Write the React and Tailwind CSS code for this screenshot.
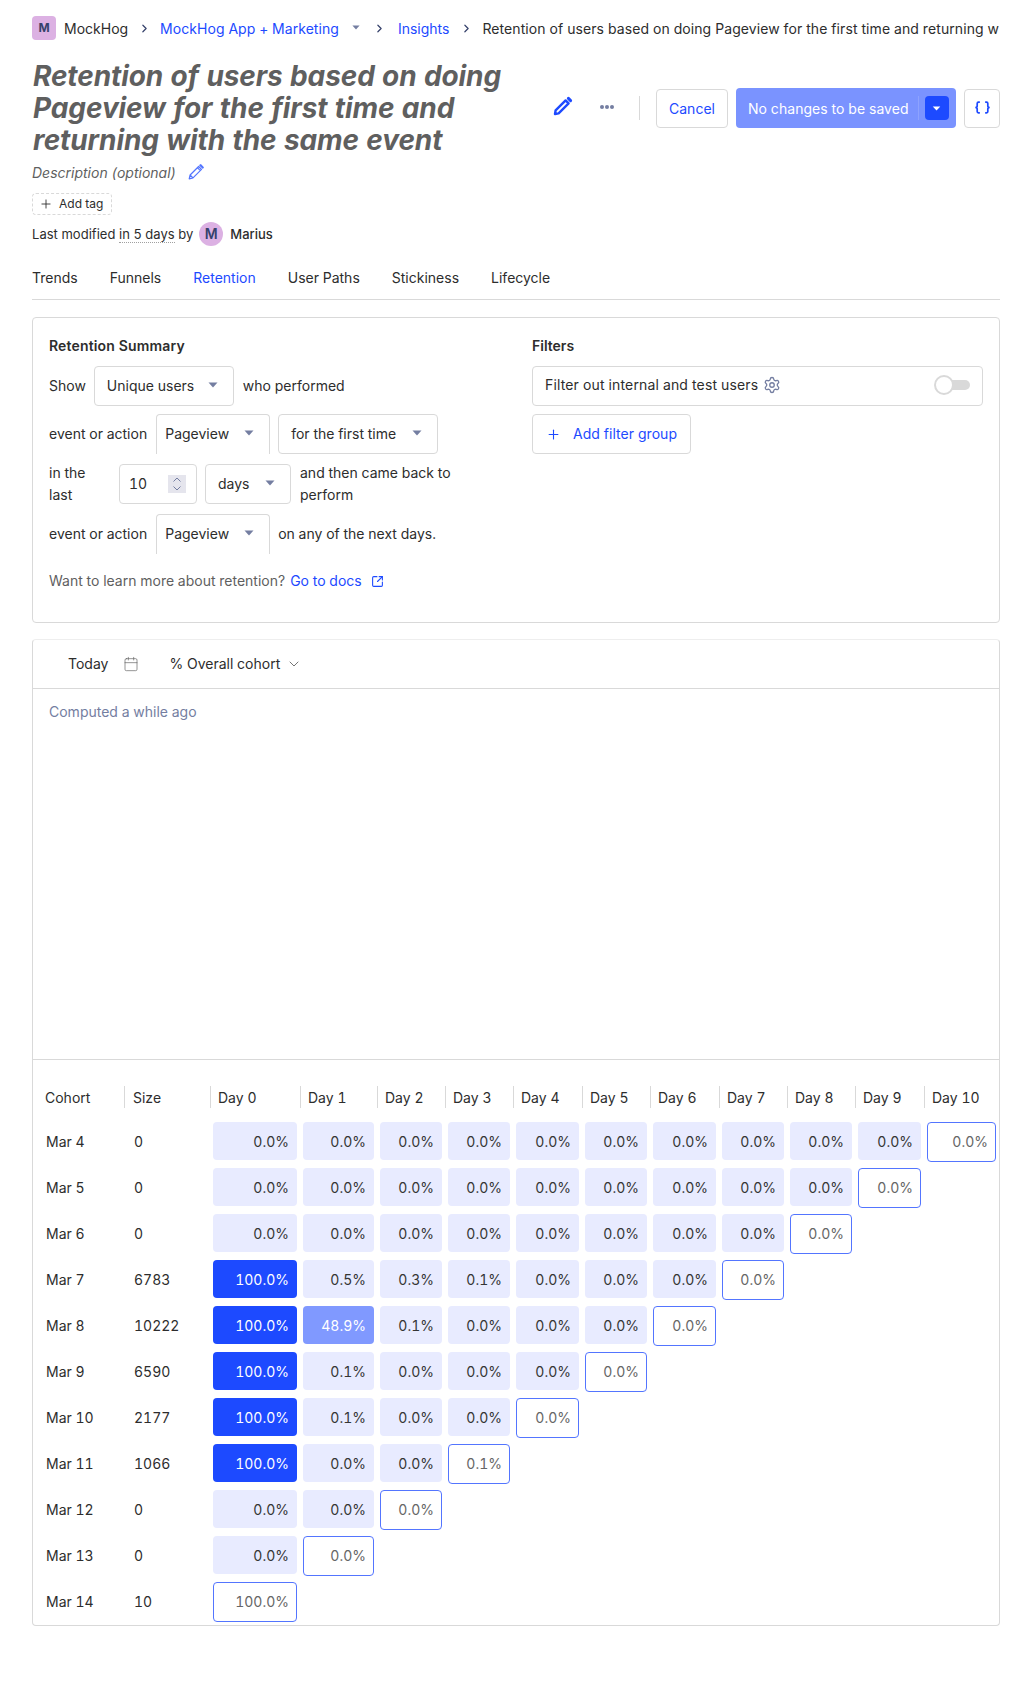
import React from 'react';
import { Calendar, ChevronDown, ChevronRight, Plus, Settings, SquareArrowOutUpRight } from 'lucide-react';

const cohorts = [
    { label: 'Mar 4', size: '0', values: ['0.0', '0.0', '0.0', '0.0', '0.0', '0.0', '0.0', '0.0', '0.0', '0.0', '0.0'] },
    { label: 'Mar 5', size: '0', values: ['0.0', '0.0', '0.0', '0.0', '0.0', '0.0', '0.0', '0.0', '0.0', '0.0'] },
    { label: 'Mar 6', size: '0', values: ['0.0', '0.0', '0.0', '0.0', '0.0', '0.0', '0.0', '0.0', '0.0'] },
    { label: 'Mar 7', size: '6783', values: ['100.0', '0.5', '0.3', '0.1', '0.0', '0.0', '0.0', '0.0'] },
    { label: 'Mar 8', size: '10222', values: ['100.0', '48.9', '0.1', '0.0', '0.0', '0.0', '0.0'] },
    { label: 'Mar 9', size: '6590', values: ['100.0', '0.1', '0.0', '0.0', '0.0', '0.0'] },
    { label: 'Mar 10', size: '2177', values: ['100.0', '0.1', '0.0', '0.0', '0.0'] },
    { label: 'Mar 11', size: '1066', values: ['100.0', '0.0', '0.0', '0.1'] },
    { label: 'Mar 12', size: '0', values: ['0.0', '0.0', '0.0'] },
    { label: 'Mar 13', size: '0', values: ['0.0', '0.0'] },
    { label: 'Mar 14', size: '10', values: ['100.0'] },
];

const columns = [
    { label: 'Size', width: 'w-[86px]', pad: 'pl-2' },
    { label: 'Day 0', width: 'w-[90px]', pad: 'pl-[7px]' },
    { label: 'Day 1', width: 'w-[77px]', pad: 'pl-[7px]' },
    { label: 'Day 2', width: 'w-[68px]', pad: 'pl-[7px]' },
    { label: 'Day 3', width: 'w-[68px]', pad: 'pl-[7px]' },
    { label: 'Day 4', width: 'w-[69px]', pad: 'pl-[7px]' },
    { label: 'Day 5', width: 'w-[68px]', pad: 'pl-[7px]' },
    { label: 'Day 6', width: 'w-[69px]', pad: 'pl-[7px]' },
    { label: 'Day 7', width: 'w-[68px]', pad: 'pl-[7px]' },
    { label: 'Day 8', width: 'w-[68px]', pad: 'pl-[7px]' },
    { label: 'Day 9', width: 'w-[69px]', pad: 'pl-[7px]' },
    { label: 'Day 10', width: 'w-[75px]', pad: 'pl-[7px]' },
];

const Caret = ({ className }) => (
    <svg viewBox="0 0 10 6" className={className} fill="currentColor">
        <path d="M0.5 0.5h9L5 5.5z" />
    </svg>
);

const PencilBold = ({ className }) => (
    <svg viewBox="0 0 20 20" className={className} fill="none" stroke="currentColor" strokeWidth="2.4" strokeLinejoin="round">
        <path d="M2 18l.6-3.6L12.6 4.4l3 3L5.6 17.4z" />
        <path d="M15.4 2.4l2.2 2.2" strokeWidth="3" strokeLinecap="round" />
    </svg>
);

const PencilOutline = ({ className }) => (
    <svg viewBox="0 0 16 16" className={className} fill="none" stroke="currentColor" strokeWidth="1.2" strokeLinejoin="round">
        <path d="M1.2 14.8l.9-3.8L10.6 2.5l2.9 2.9-8.5 8.5zM2.1 11l2.9 2.9M9.4 3.7l2.9 2.9M11.8 1.3l.9-.6 2.6 2.6-.6.9z" />
    </svg>
);

const CurlyBraces = ({ className }) => (
    <svg viewBox="0 0 16 12" className={className} fill="none" stroke="currentColor" strokeWidth="1.6">
        <path d="M5.5 1H4.2C3.4 1 3 1.4 3 2.2v2.4C3 5.4 2.4 6 1.2 6 2.4 6 3 6.6 3 7.4v2.4c0 .8.4 1.2 1.2 1.2h1.3" />
        <path d="M10.5 1h1.3c.8 0 1.2.4 1.2 1.2v2.4c0 .8.6 1.4 1.8 1.4-1.2 0-1.8.6-1.8 1.4v2.4c0 .8-.4 1.2-1.2 1.2h-1.3" />
    </svg>
);

const StepperArrows = () => (
    <svg viewBox="0 0 18 18" className="w-[18px] h-[18px] bg-[#e5e5ed]" fill="none" stroke="#747ea1" strokeWidth="1">
        <path d="M5.5 6.5L9 3l3.5 3.5M5.5 11.5L9 15l3.5-3.5" />
    </svg>
);

const Select = ({ label, width, clipped, pad = 'pl-3' }) => (
    <div className={`flex items-center justify-between h-10 shrink-0 ${pad} pr-[15px] border border-[#d9d9d9] ${clipped ? 'pb-0.5 rounded-t-[4px] border-b-0' : 'rounded-[4px]'} ${width}`}>
        <span>{label}</span>
        <Caret className="w-[10px] h-[6px] text-[#747ea1] mb-0.5" />
    </div>
);

const Cell = ({ value, latest }) => {
    if (latest) {
        return (
            <div className="h-10 border border-[#5375ff] rounded-[4px] bg-white text-right pr-[7px] leading-[38px] text-[#666666]">
                {value}%
            </div>
        );
    }
    const isFull = value === '100.0';
    const isMid = value === '48.9';
    return (
        <div className={`h-[38px] rounded-[4px] text-right pr-[8px] leading-[40px] ${isFull ? 'bg-[#1d4aff] text-white' : isMid ? 'bg-[#8099ff] text-white' : 'bg-[#e8ebff] text-[#353535]'}`}>
            {value}%
        </div>
    );
};

const App = () => {
    return (
        <div className="min-h-[1705px] bg-white px-8 pt-4 font-[Inter,sans-serif] text-sm text-[#2d2d2d] tabular-nums overflow-hidden">
            {/* breadcrumbs */}
            <div className="flex items-center h-6 whitespace-nowrap">
                <div className="flex items-center justify-center w-6 h-6 shrink-0 rounded-[4px] bg-[#dcb1e3] text-[#35416b] text-xs font-bold">M</div>
                <span className="ml-2 pt-px">MockHog</span>
                <ChevronRight size={13} strokeWidth={2.25} className="ml-[10px] shrink-0 text-[#35416b]" />
                <span className="ml-[9px] pt-px tracking-[0.05px] text-[#1d4aff]">MockHog App + Marketing</span>
                <Caret className="ml-[13px] w-2 h-[5px] shrink-0 text-[#747ea1] mb-0.5" />
                <ChevronRight size={13} strokeWidth={2.25} className="ml-[13px] shrink-0 text-[#35416b]" />
                <span className="ml-[12px] pt-px text-[#1d4aff]">Insights</span>
                <ChevronRight size={13} strokeWidth={2.25} className="ml-[11px] shrink-0 text-[#35416b]" />
                <span className="ml-[9px] pt-px tracking-[0.09px]">Retention of users based on doing Pageview for the first time and returning w</span>
            </div>

            {/* title + actions */}
            <div className="flex items-center justify-between mt-5">
                <h1 className="w-[500px] pl-px text-[28px] leading-8 font-bold italic tracking-[-0.1px] text-[#5f5f5f] [font-optical-sizing:none]">
                    Retention of users based on doing Pageview for the first time and returning with the same event
                </h1>
                <div className="flex items-center">
                    <PencilBold className="w-5 h-5 mb-1 text-[#1d4aff]" />
                    <div className="flex items-center gap-px ml-[27px] mb-[3px]">
                        <span className="w-1 h-1 rounded-full bg-[#747ea1]" />
                        <span className="w-1 h-1 rounded-full bg-[#747ea1]" />
                        <span className="w-1 h-1 rounded-full bg-[#747ea1]" />
                    </div>
                    <div className="w-px h-6 bg-[#d9d9d9] ml-[25px]" />
                    <button className="w-[72px] h-[39px] self-end ml-4 rounded-[4px] border border-[#d9d9d9] text-[#1d4aff]">Cancel</button>
                    <div className="flex items-center w-[220px] h-10 ml-2 pl-3 rounded-[4px] bg-[#7a93ff] text-white">
                        <span className="pt-[2px] tracking-[0.05px]">No changes to be saved</span>
                        <div className="w-px h-6 bg-[#8da2ff] ml-[9px]" />
                        <div className="flex items-center justify-center w-6 h-6 ml-[6px] rounded-[4px] bg-[#1d4aff]">
                            <Caret className="w-[9px] h-[5px] text-white" />
                        </div>
                    </div>
                    <button className="flex items-center justify-center w-9 h-[39px] self-end ml-2 rounded-[4px] border border-[#d9d9d9] text-[#1d4aff]">
                        <CurlyBraces className="w-[17px] h-[13px] mb-[3px]" />
                    </button>
                </div>
            </div>

            {/* meta */}
            <div className="flex items-center h-[22px] mt-[6px] italic text-[#5f5f5f]">
                <span>Description (optional)</span>
                <PencilOutline className="w-4 h-4 ml-[12px] mb-[3px] text-[#5375ff]" />
            </div>
            <div className="flex items-center w-[80px] h-[22px] mt-[9px] pl-[6px] rounded-[4px] border border-dashed border-[#d9d9d9] text-xs">
                <Plus size={14} strokeWidth={1.5} />
                <span className="ml-[6px]">Add tag</span>
            </div>
            <div className="flex items-center h-6 mt-[7px] text-[13px]">
                <span className="tracking-[0.03px]">Last modified <span className="border-b border-dotted border-[#a0a0a0]">in 5 days</span> by</span>
                <div className="flex items-center justify-center w-6 h-6 ml-[6px] rounded-full bg-[#dcb1e3] text-[#35416b] text-sm font-semibold">M</div>
                <span className="ml-[7px] font-medium">Marius</span>
            </div>

            {/* tabs */}
            <div className="flex gap-8 h-[34px] mt-5 border-b border-[#d9d9d9] leading-6">
                <span>Trends</span>
                <span>Funnels</span>
                <span className="text-[#1d4aff]">Retention</span>
                <span>User Paths</span>
                <span>Stickiness</span>
                <span>Lifecycle</span>
            </div>

            {/* summary */}
            <div className="grid grid-cols-[483px_1fr] mt-[17px] px-4 pt-[17px] pb-[30px] rounded-[4px] border border-[#d9d9d9] leading-[22px]">
                <div>
                    <div className="font-semibold tracking-[0.15px]">Retention Summary</div>
                    <div className="flex items-center gap-2 mt-[9px]">
                        <span>Show</span>
                        <Select label="Unique users" width="w-[140px]" />
                        <span className="ml-px">who performed</span>
                    </div>
                    <div className="flex items-center gap-2 mt-2">
                        <span className="mr-px">event or action</span>
                        <Select label="Pageview" width="w-[114px]" clipped pad="pl-[8px]" />
                        <Select label="for the first time" width="w-[160px]" />
                    </div>
                    <div className="flex items-center gap-2 h-10 mt-[10px]">
                        <span className="w-[62px]">in the last</span>
                        <div className="flex items-center justify-between w-[78px] h-10 pl-[9px] pr-[10px] rounded-[4px] border border-[#d9d9d9]">
                            <span>10</span>
                            <StepperArrows />
                        </div>
                        <Select label="days" width="w-[86px]" />
                        <span className="w-[160px] ml-px">and then came back to perform</span>
                    </div>
                    <div className="flex items-center gap-2 mt-[10px]">
                        <span className="mr-px">event or action</span>
                        <Select label="Pageview" width="w-[114px]" clipped pad="pl-[8px]" />
                        <span>on any of the next days.</span>
                    </div>
                    <div className="flex items-center mt-4 text-[#5f5f5f]">
                        <span>Want to learn more about retention?</span>
                        <span className="ml-[5px] text-[#1d4aff]">Go to docs</span>
                        <SquareArrowOutUpRight size={13} className="ml-[9px] text-[#1d4aff]" />
                    </div>
                </div>
                <div>
                    <div className="font-semibold">Filters</div>
                    <div className="flex items-center justify-between h-10 mt-[9px] pl-3 pr-3 pb-0.5 rounded-[4px] border border-[#d9d9d9]">
                        <div className="flex items-center gap-[5px]">
                            <span className="tracking-[0.15px]">Filter out internal and test users</span>
                            <Settings size={18} strokeWidth={1.75} className="text-[#747ea1]" />
                        </div>
                        <div className="relative w-9 h-5 flex items-center">
                            <div className="ml-2 w-[28px] h-[10px] rounded-full bg-[#d9d9d9]" />
                            <div className="absolute left-0 w-5 h-5 rounded-full bg-white border-2 border-[#d9d9d9]" />
                        </div>
                    </div>
                    <div className="flex items-center w-[159px] h-10 mt-2 pl-[13px] rounded-[4px] border border-[#d9d9d9] text-[#1d4aff]">
                        <Plus size={15} strokeWidth={1.75} />
                        <span className="ml-[12px] tracking-[0.05px]">Add filter group</span>
                    </div>
                </div>
            </div>

            {/* results */}
            <div className="mt-4 rounded-[4px] border border-[#d9d9d9] border-t-[#eeeeee]">
                <div className="flex items-center h-[49px] pl-[35px] border-b border-[#d9d9d9]">
                    <span>Today</span>
                    <Calendar size={16} strokeWidth={1} className="ml-[15px] text-[#5f5f5f]" />
                    <span className="ml-[30px]">% Overall cohort</span>
                    <ChevronDown size={16} strokeWidth={1} className="ml-[6px] text-[#2d2d2d]" />
                </div>
                <div className="h-[371px] pl-4 pt-3 border-b border-[#d9d9d9] leading-[22px] text-[#747ea1]">Computed a while ago</div>
                <table className="table-fixed border-collapse w-[966px] mb-px">
                    <thead>
                        <tr className="h-[58px]">
                            <th className="w-[91px] pt-[26px] align-top text-left font-normal">
                                <div className="h-[22px] pl-3 leading-[24px]">Cohort</div>
                            </th>
                            {columns.map((col) => (
                                <th key={col.label} className={`${col.width} pt-[26px] align-top text-left font-normal`}>
                                    <div className={`h-[22px] ${col.pad} leading-[24px] border-l border-[#d9d9d9]`}>{col.label}</div>
                                </th>
                            ))}
                        </tr>
                    </thead>
                    <tbody>
                        {cohorts.map((row) => (
                            <tr key={row.label} className="h-[46px]">
                                <td className="pl-[13px] align-top leading-[22px] pt-[13px]">{row.label}</td>
                                <td className="pl-[10px] align-top leading-[22px] pt-[13px]">{row.size}</td>
                                {row.values.map((value, i) => (
                                    <td key={i} className="px-[3px] pt-1 align-top">
                                        <Cell value={value} latest={i === row.values.length - 1} />
                                    </td>
                                ))}
                            </tr>
                        ))}
                    </tbody>
                </table>
            </div>
        </div>
    );
};

export default App;
